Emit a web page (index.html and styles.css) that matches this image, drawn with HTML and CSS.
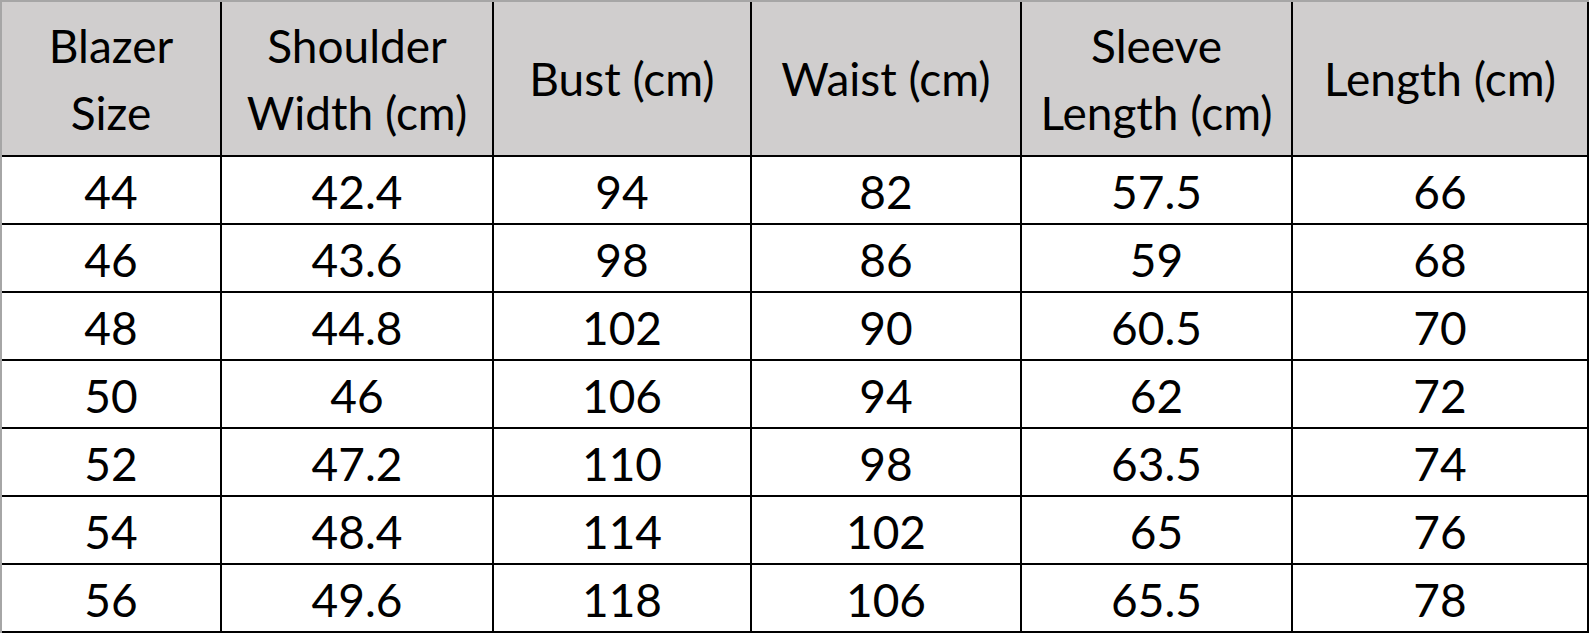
FILE: index.html
```html
<!DOCTYPE html>
<html lang="en">
<head>
<meta charset="utf-8">
<title>Blazer Size Chart</title>
<link rel="stylesheet" href="styles.css">
</head>
<body>
<div class="chart">
  <div class="cell head">Blazer<br>Size</div>
  <div class="cell head">Shoulder<br>Width (cm)</div>
  <div class="cell head">Bust (cm)</div>
  <div class="cell head">Waist (cm)</div>
  <div class="cell head">Sleeve<br>Length (cm)</div>
  <div class="cell head">Length (cm)</div>

  <div class="cell">44</div><div class="cell">42.4</div><div class="cell">94</div><div class="cell">82</div><div class="cell">57.5</div><div class="cell">66</div>
  <div class="cell">46</div><div class="cell">43.6</div><div class="cell">98</div><div class="cell">86</div><div class="cell">59</div><div class="cell">68</div>
  <div class="cell">48</div><div class="cell">44.8</div><div class="cell">102</div><div class="cell">90</div><div class="cell">60.5</div><div class="cell">70</div>
  <div class="cell">50</div><div class="cell">46</div><div class="cell">106</div><div class="cell">94</div><div class="cell">62</div><div class="cell">72</div>
  <div class="cell">52</div><div class="cell">47.2</div><div class="cell">110</div><div class="cell">98</div><div class="cell">63.5</div><div class="cell">74</div>
  <div class="cell">54</div><div class="cell">48.4</div><div class="cell">114</div><div class="cell">102</div><div class="cell">65</div><div class="cell">76</div>
  <div class="cell">56</div><div class="cell">49.6</div><div class="cell">118</div><div class="cell">106</div><div class="cell">65.5</div><div class="cell">78</div>
</div>
</body>
</html>
```

FILE: styles.css
```css
html, body {
  margin: 0;
  padding: 0;
  background: #ffffff;
}

.chart {
  display: grid;
  grid-template-columns: 220px 272px 258px 270px 271px 296px;
  grid-template-rows: 155px repeat(7, 68px);
  width: max-content;
  border-left: 2px solid #a6a6a6;
  border-top: 2px solid #a6a6a6;
  font-family: Lato, "Open Sans", "Liberation Sans", sans-serif;
  font-size: 46px;
  color: #000000;
}

.cell {
  box-sizing: border-box;
  border-right: 2px solid #000000;
  border-bottom: 2px solid #000000;
  display: flex;
  align-items: center;
  justify-content: center;
  text-align: center;
  line-height: 67px;
  padding-top: 2px;
}

.head {
  background: #d0cece;
  padding-top: 0;
}
```
